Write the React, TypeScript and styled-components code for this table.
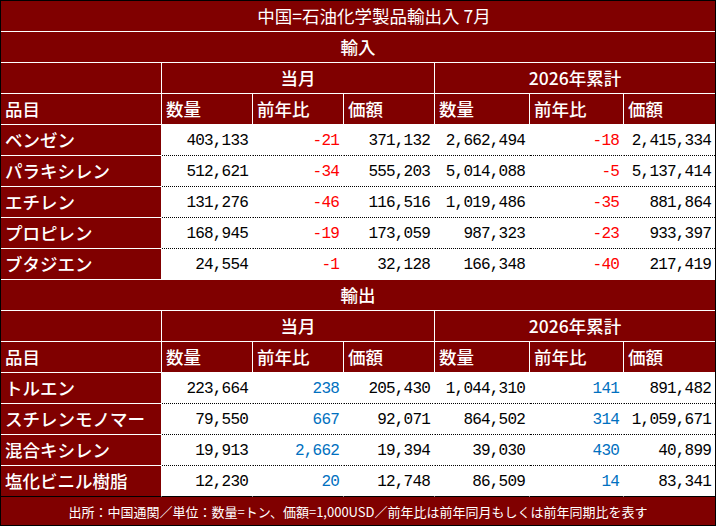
import React from 'react'
import styled, { createGlobalStyle } from 'styled-components'

const GlobalStyle = createGlobalStyle`
  html, body {
    margin: 0;
    padding: 0;
    background: #fff;
  }
  body {
    font-family: 'Noto Sans CJK JP', sans-serif;
  }
`

const maroon = '#800000'

const Table = styled.table`
  border-collapse: separate;
  border-spacing: 0;
  border: 1px solid #000;
  width: 716px;
  table-layout: fixed;
  background: ${maroon};
  color: #fff;
  font-family: 'Noto Sans CJK JP', sans-serif;
  font-size: 17.5px;
`

type Edge = 'white' | 'dotted' | 'black'

const edges: Record<Edge, string> = {
  white: '1px solid #fff',
  dotted: '1px dotted #000',
  black: '1px solid #000',
}

const Cell = styled.td`
  box-sizing: border-box;
  height: 31px;
  padding: 0 4px;
  border-right: 1px solid #fff;
  border-bottom: 1px solid #fff;
  white-space: nowrap;
  overflow: hidden;
  line-height: 1;
  &:last-child {
    border-right: none;
  }
`

const TitleCell = styled(Cell)`
  text-align: center;
  padding-left: 36px;
`

const SectionCell = styled(Cell)`
  text-align: center;
  font-weight: 500;
`

const GroupCell = styled(Cell)`
  text-align: center;
  font-weight: 500;
`

const HeadCell = styled(Cell)`
  text-align: left;
  font-weight: 500;
`

const LabelCell = styled(Cell)<{ $edge: Edge }>`
  text-align: left;
  font-weight: 500;
  border-bottom: ${(p) => (p.$edge === 'black' ? edges.black : edges.white)};
`

const NumCell = styled(Cell)<{ $tone?: string; $edge: Edge }>`
  background: #fff;
  color: ${(p) => p.$tone ?? '#000'};
  text-align: right;
  font-family: 'Liberation Mono', monospace;
  font-size: 16px;
  letter-spacing: -0.8px;
  padding-top: 2px;
  border-bottom: ${(p) => edges[p.$edge]};
`

const FootCell = styled.td`
  height: 28px;
  padding: 0;
  text-align: center;
  font-size: 13px;
  line-height: 1;
`

type Row = [string, string, string, string, string, string, string]

const imports: Row[] = [
  ['ベンゼン', '403,133', '-21', '371,132', '2,662,494', '-18', '2,415,334'],
  ['パラキシレン', '512,621', '-34', '555,203', '5,014,088', '-5', '5,137,414'],
  ['エチレン', '131,276', '-46', '116,516', '1,019,486', '-35', '881,864'],
  ['プロピレン', '168,945', '-19', '173,059', '987,323', '-23', '933,397'],
  ['ブタジエン', '24,554', '-1', '32,128', '166,348', '-40', '217,419'],
]

const exports: Row[] = [
  ['トルエン', '223,664', '238', '205,430', '1,044,310', '141', '891,482'],
  ['スチレンモノマー', '79,550', '667', '92,071', '864,502', '314', '1,059,671'],
  ['混合キシレン', '19,913', '2,662', '19,394', '39,030', '430', '40,899'],
  ['塩化ビニル樹脂', '12,230', '20', '12,748', '86,509', '14', '83,341'],
]

const widths = [161, 91, 91, 91, 95, 94, 91]
const heads = ['品目', '数量', '前年比', '価額', '数量', '前年比', '価額']

// 前年比 columns: red when down, blue when up
const tone = (v: string) => (v.startsWith('-') ? '#ff0000' : '#0070c0')

function Section({ name, rows, closing }: { name: string; rows: Row[]; closing?: boolean }) {
  return (
    <>
      <tr>
        <SectionCell colSpan={7}>{name}</SectionCell>
      </tr>
      <tr>
        <Cell />
        <GroupCell colSpan={3}>当月</GroupCell>
        <GroupCell colSpan={3}>2026年累計</GroupCell>
      </tr>
      <tr>
        {heads.map((h, i) => (
          <HeadCell key={i}>{h}</HeadCell>
        ))}
      </tr>
      {rows.map((r, i) => {
        const last = i === rows.length - 1
        const edge: Edge = last ? (closing ? 'black' : 'white') : 'dotted'
        return (
          <tr key={r[0]}>
            <LabelCell $edge={edge}>{r[0]}</LabelCell>
            {r.slice(1).map((v, j) => (
              <NumCell key={j} $tone={j === 1 || j === 4 ? tone(v) : undefined} $edge={edge}>
                {v}
              </NumCell>
            ))}
          </tr>
        )
      })}
    </>
  )
}

export default function App() {
  return (
    <>
      <GlobalStyle />
      <Table>
        <colgroup>
          {widths.map((w, i) => (
            <col key={i} style={{ width: w }} />
          ))}
        </colgroup>
        <tbody>
          <tr>
            <TitleCell colSpan={7}>中国=石油化学製品輸出入 7月</TitleCell>
          </tr>
          <Section name="輸入" rows={imports} />
          <Section name="輸出" rows={exports} closing />
          <tr>
            <FootCell colSpan={7}>
              出所：中国通関／単位：数量=トン、価額=1,000USD／前年比は前年同月もしくは前年同期比を表す
            </FootCell>
          </tr>
        </tbody>
      </Table>
    </>
  )
}
